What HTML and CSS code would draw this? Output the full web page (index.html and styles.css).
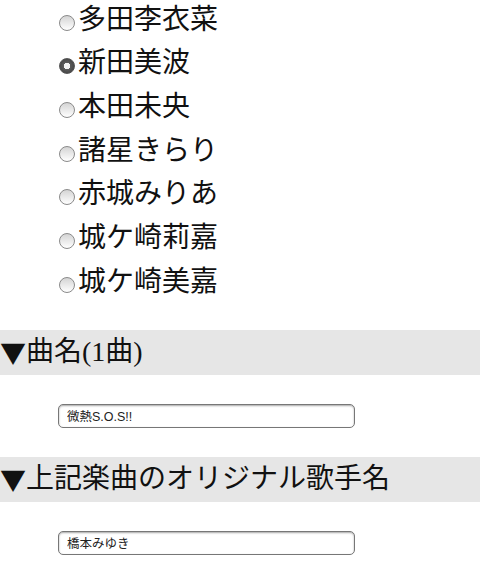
FILE: index.html
```html
<!DOCTYPE html>
<html lang="ja">
<head>
<meta charset="utf-8">
<link rel="stylesheet" href="styles.css">
</head>
<body>
<ul class="choices">
  <li><label class="choice"><input type="radio" name="idol" class="radio"><span>多田李衣菜</span></label></li>
  <li><label class="choice"><input type="radio" name="idol" class="radio" checked><span>新田美波</span></label></li>
  <li><label class="choice"><input type="radio" name="idol" class="radio"><span>本田未央</span></label></li>
  <li><label class="choice"><input type="radio" name="idol" class="radio"><span>諸星きらり</span></label></li>
  <li><label class="choice"><input type="radio" name="idol" class="radio"><span>赤城みりあ</span></label></li>
  <li><label class="choice"><input type="radio" name="idol" class="radio"><span>城ケ崎莉嘉</span></label></li>
  <li><label class="choice"><input type="radio" name="idol" class="radio"><span>城ケ崎美嘉</span></label></li>
</ul>
<h2 class="section-title serif"><span class="marker">▼</span>曲名(1曲)</h2>
<div class="field"><input class="text-input" type="text" value="微熱S.O.S!!"></div>
<h2 class="section-title"><span class="marker">▼</span>上記楽曲のオリジナル歌手名</h2>
<div class="field"><input class="text-input" type="text" value="橋本みゆき"></div>
</body>
</html>
```

FILE: styles.css
```css
html, body {
  margin: 0;
  padding: 0;
  background: #fff;
}
body {
  width: 480px;
  height: 579px;
  overflow: hidden;
  font-family: "Liberation Sans", "Noto Sans CJK JP", sans-serif;
  color: #111;
}
.choices {
  list-style: none;
  margin: -2px 0 0 0;
  padding: 0 0 0 57px;
}
.choices li {
  height: 43.67px;
  display: flex;
  align-items: center;
}
.choice {
  display: flex;
  align-items: center;
  font-size: 28px;
  line-height: 1;
}
.radio {
  -webkit-appearance: none;
  appearance: none;
  margin: 6px 3px 0 2px;
  width: 16px;
  height: 16px;
  border-radius: 50%;
  border: 1px solid #8a8a8a;
  background: linear-gradient(#d4d4d4, #ffffff);
  box-sizing: border-box;
  flex: none;
}
.radio:checked {
  border-color: #555;
  background: radial-gradient(circle, #f2f2f2 0 3px, #5a5a5a 3.5px, #3a3a3a 100%);
}
.section-title {
  margin: 26px 0 0 0;
  height: 45px;
  display: flex;
  align-items: center;
  background: #e6e6e6;
  font-size: 28px;
  font-weight: normal;
  line-height: 1;
  color: #111;
}
.section-title.serif {
  font-family: "Liberation Serif", "Noto Sans CJK JP", serif;
}
.marker {
  font-family: "Noto Sans CJK JP", sans-serif;
  font-size: 26px;
  flex: none;
}
.field {
  padding: 29px 0 0 58px;
}
.text-input {
  display: block;
  box-sizing: border-box;
  width: 297px;
  height: 24px;
  margin: 0;
  padding: 0 8px;
  border: 1px solid #777;
  border-radius: 5px;
  box-shadow: inset 0 1px 2px rgba(0,0,0,0.35);
  background: #fff;
  font-family: "Liberation Sans", "Noto Sans CJK JP", sans-serif;
  font-size: 12.5px;
  color: #222;
}
.field + .section-title {
  margin-top: 29px;
}
```
